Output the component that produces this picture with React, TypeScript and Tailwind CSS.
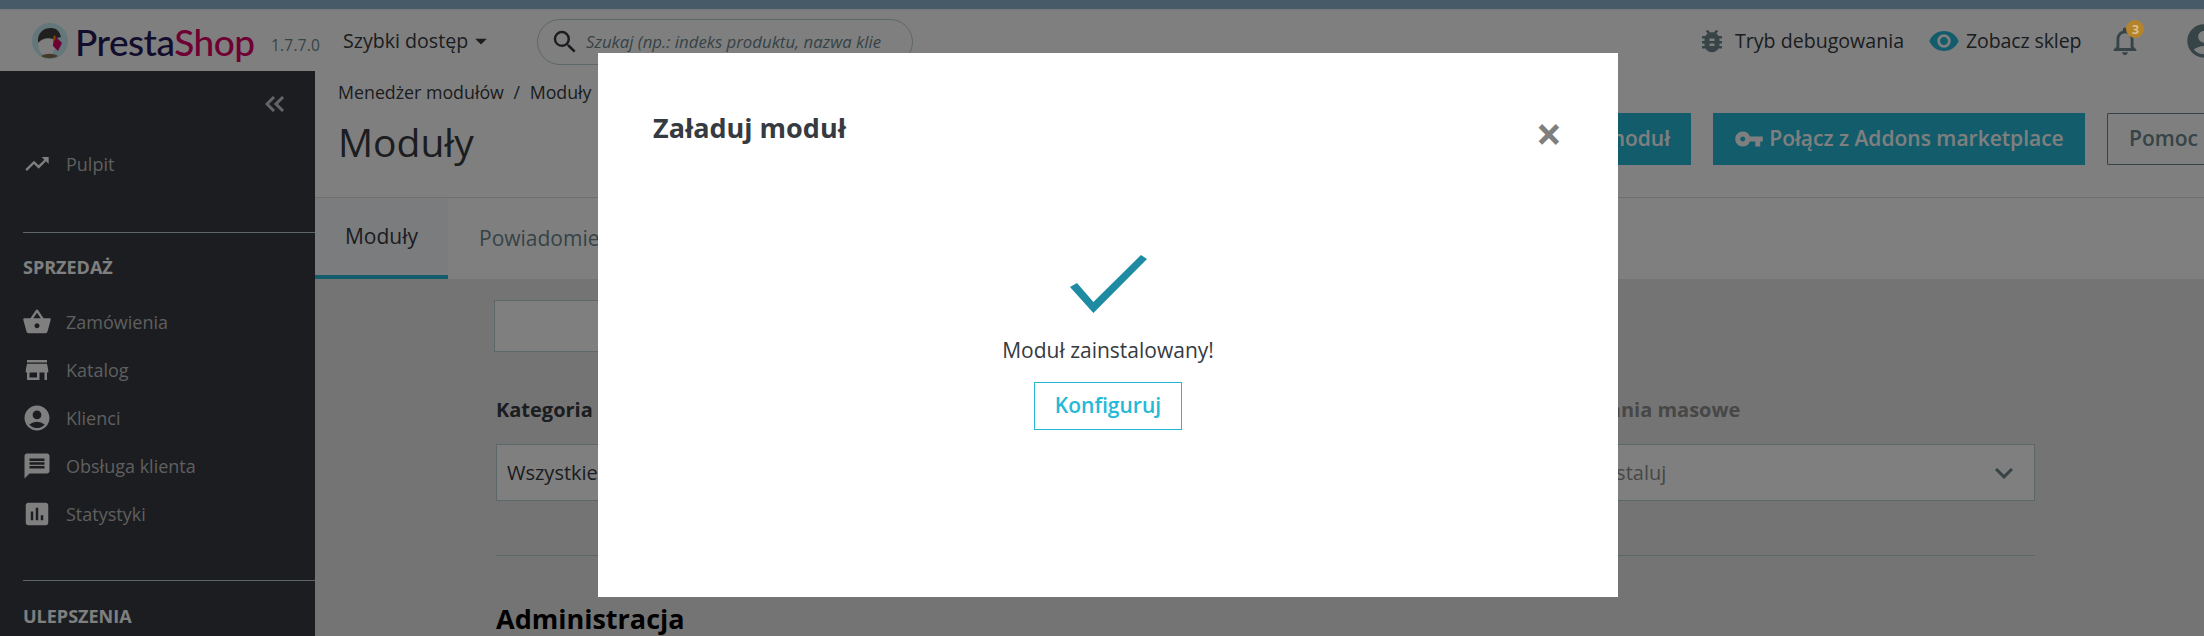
import {
  MdTrendingUp,
  MdShoppingBasket,
  MdStore,
  MdAccountCircle,
  MdMessage,
  MdAssessment,
  MdVpnKey,
  MdBugReport,
  MdVisibility,
  MdNotificationsNone,
  MdSearch,
  MdKeyboardArrowDown,
  MdArrowDropDown,
} from 'react-icons/md';

const sales = [
  { label: 'Zamówienia', icon: MdShoppingBasket },
  { label: 'Katalog', icon: MdStore },
  { label: 'Klienci', icon: MdAccountCircle },
  { label: 'Obsługa klienta', icon: MdMessage },
  { label: 'Statystyki', icon: MdAssessment },
];

function Logo() {
  return (
    <div className="flex items-center w-[271px] pl-[32px] shrink-0">
      <svg width="36" height="37" viewBox="0 0 36 37" className="shrink-0">
        <circle cx="18" cy="18" r="18" fill="#c8eef6" />
        <path d="M6 20C5 9 12 5 19 5c6 0 9 4 10 9l-8 2c-5 0-10 1-15 4z" fill="#3f3f3f" />
        <path d="M6 20c3-4 10-6 15-4l2 10-3 5c-3 2-7 2-10 0-3-3-4-7-4-11z" fill="#ffffff" />
        <path d="M22 12l8 8-4 8-5-5z" fill="#df0067" />
        <path d="M22 12l2 2-2 5-1-3z" fill="#f39200" />
        <path d="M9 33c5-3 12-3 17 0-5 3-12 3-17 0z" fill="#8a7350" />
      </svg>
      <span className="ml-[7px] text-[37px] leading-none tracking-[-0.5px] font-medium font-['Lato',sans-serif] text-[#251b5b]">
        Presta<span className="text-[#df0067]">Shop</span>
      </span>
    </div>
  );
}

function Header() {
  return (
    <header className="h-[60px] bg-white flex items-center text-[#363a41] text-[19.6px] whitespace-nowrap">
      <Logo />
      <span className="text-[15.5px] mt-[10px] text-[#6c868e] w-[72px] shrink-0 tracking-[0.2px]">1.7.7.0</span>
      <span className="flex items-center shrink-0 text-[#363a41] w-[194px]">
        Szybki dostęp
        <MdArrowDropDown className="text-[#363a41] ml-[-1px]" size={28} />
      </span>
      <div className="w-[376px] h-[46px] mt-[2px] rounded-full border border-[#bbcdd2] flex items-center pl-[12px] shrink-0 overflow-hidden">
        <MdSearch size={30} className="text-[#363a41] shrink-0" />
        <span className="italic text-[16.8px] text-[#6c868e] ml-[6px]">Szukaj (np.: indeks produktu, nazwa klie</span>
      </div>
      <div className="ml-auto flex items-center shrink-0 w-[503px]">
        <MdBugReport size={30} className="text-[#6c868e] ml-[-4px] shrink-0" />
        <span className="ml-[8px]">Tryb debugowania</span>
        <MdVisibility size={32} className="text-[#25b9d7] ml-[24px] shrink-0" />
        <span className="ml-[6px] tracking-[-0.15px]">Zobacz sklep</span>
        <span className="relative ml-[27px] shrink-0">
          <MdNotificationsNone size={34} className="text-[#6c868e]" />
          <span className="absolute z-10 top-[-4px] right-[-2px] w-[18px] h-[18px] rounded-full bg-[#b5832b] text-[#d8c08a] text-[13px] font-bold leading-[18px] text-center">3</span>
        </span>
        <MdAccountCircle size={40} className="text-[#6c868e] ml-[42px] shrink-0" />
      </div>
    </header>
  );
}

function Sidebar() {
  return (
    <aside className="w-[315px] h-full shrink-0 bg-[#363a41] text-[#bebebe] text-[18px]">
      <div className="h-[62px] flex items-end justify-end pr-[30px] pb-[21px]">
        <svg width="20" height="16" viewBox="0 0 20 16" fill="none" stroke="#c8c8c8" strokeWidth="3">
          <path d="M9 1L2 8l7 7M18 1l-7 7 7 7" />
        </svg>
      </div>
      <div className="h-[48px] mt-[7px] flex items-center pl-[23px]">
        <MdTrendingUp size={28} className="text-[#ffffff]" />
        <span className="ml-[15px]">Pulpit</span>
      </div>
      <div className="mt-[44px] ml-[23px] border-t border-[#bbcdd2]" />
      <div className="pl-[23px] mt-[22px] font-bold text-[18px] leading-[24px] text-white">SPRZEDAŻ</div>
      <ul className="mt-[19px]">
        {sales.map((item) => (
          <li key={item.label} className="h-[48px] flex items-center pl-[22px]">
            <item.icon size={30} className="text-white shrink-0" />
            <span className="ml-[14px]">{item.label}</span>
          </li>
        ))}
      </ul>
      <div className="mt-[42px] ml-[23px] border-t border-[#bbcdd2]" />
      <div className="pl-[23px] mt-[23px] font-bold text-[18px] leading-[24px] text-white">ULEPSZENIA</div>
    </aside>
  );
}

function Toolbar() {
  return (
    <section className="bg-white border-b border-[#dfdfdf] h-[127px] flex text-[#363a41]">
      <div className="pl-[23px] pt-[9px] w-[700px] shrink-0">
        <div className="text-[17.8px] leading-[24px] whitespace-nowrap">
          Menedżer modułów <span className="mx-[5px]">/</span> Moduły
        </div>
        <h1 className="text-[39px] leading-[54px] mt-[11px] font-normal">Moduły</h1>
      </div>
      <div className="flex gap-[22px] pt-[42px] ml-auto items-start shrink-0 w-[1189px] justify-end overflow-hidden">
        <button className="h-[52px] px-[21px] bg-[#25b9d7] text-white font-semibold text-[21px] shrink-0">
          Załaduj moduł
        </button>
        <button className="h-[52px] w-[372px] bg-[#25b9d7] text-white font-semibold text-[21px] flex items-center justify-center gap-[5px] shrink-0">
          <MdVpnKey size={30} className="text-white" />
          Połącz z Addons marketplace
        </button>
        <button className="h-[52px] w-[97px] pl-[21px] text-left border border-[#6c868e] border-r-0 rounded-l-[2px] font-semibold text-[21px] text-[#6c868e] shrink-0">
          Pomoc
        </button>
      </div>
    </section>
  );
}

function Tabs() {
  return (
    <nav className="h-[81px] bg-white flex text-[21px]">
      <div className="w-[133px] bg-[#f6f9fb] border-b-[4px] border-[#25b9d7] flex items-center justify-center text-[#363a41]">
        Moduły
      </div>
      <div className="pl-[31px] flex items-center text-[#6c868e]">Powiadomienia</div>
    </nav>
  );
}

function Filters() {
  return (
    <div className="pl-[181px] pr-[169px] text-[#363a41]">
      <div className="mt-[21px] ml-[-2px] w-[760px] h-[52px] bg-white border border-[#bbcdd2]" />
      <div className="mt-[44px] flex justify-between">
        <div className="w-[500px]">
          <div className="font-bold text-[20px] leading-[27px]">Kategoria</div>
          <div className="mt-[21px] h-[57px] bg-white border border-[#bbcdd2] flex items-center pl-[10px] text-[20px]">
            Wszystkie kategorie
          </div>
        </div>
        <div className="w-[475px]">
          <div className="font-bold text-[20px] leading-[27px] text-[#8e8e8e]">Działania masowe</div>
          <div className="mt-[21px] h-[57px] bg-white border border-[#bbcdd2] flex items-center justify-between pl-[10px] pr-[12px] text-[20px] text-[#8e8e8e]">
            Odinstaluj
            <MdKeyboardArrowDown size={36} className="text-[#6c868e]" />
          </div>
        </div>
      </div>
      <div className="mt-[54px] border-t border-[#bbcdd2]" />
      <h2 className="mt-[44px] font-bold text-[27px] leading-[38px] text-black">Administracja</h2>
    </div>
  );
}

function UploadModal() {
  return (
    <div className="absolute left-[598px] top-[53px] w-[1020px] h-[544px] bg-white text-[#363a41]">
      <div className="flex justify-between pl-[55px] pr-[56px] pt-[57px]">
        <h3 className="font-bold text-[27px] leading-[36px]">Załaduj moduł</h3>
        <span className="font-bold text-[46px] leading-[46px] text-[#7f7f7f]">×</span>
      </div>
      <div className="flex flex-col items-center mt-[99px]">
        <svg width="77" height="58" viewBox="0 0 77 58">
          <path d="M0 32L7 28 23.4 47 71 0 77 4 23.4 58z" fill="#1f8ba2" />
        </svg>
        <p className="mt-[24px] text-[21px] leading-[27px]">Moduł zainstalowany!</p>
        <button className="mt-[18px] w-[148px] h-[48px] border border-[#25b9d7] text-[#25b9d7] font-semibold text-[21px]">
          Konfiguruj
        </button>
      </div>
    </div>
  );
}

export default function App() {
  return (
    <div className="relative w-[2204px] h-[636px] overflow-hidden bg-[#e9e9e9] font-['Open_Sans',sans-serif]">
      <div className="h-[9px] bg-[#8db4d0]" />
      <div className="h-[2px] bg-[#f0f4f8]" />
      <Header />
      <div className="flex h-[565px]">
        <Sidebar />
        <main className="flex-1 min-w-0">
          <Toolbar />
          <Tabs />
          <Filters />
        </main>
      </div>
      <div className="absolute inset-0 bg-black/50" />
      <UploadModal />
    </div>
  );
}
